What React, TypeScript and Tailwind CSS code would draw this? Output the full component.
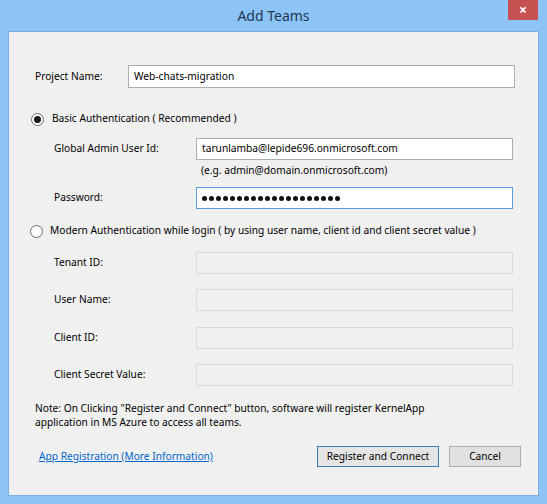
import React from 'react';

const font = { fontFamily: '"Noto Sans", "Open Sans", sans-serif' };

function Radio({ checked }: { checked?: boolean }) {
  return (
    <span className="flex h-[13px] w-[13px] shrink-0 items-center justify-center rounded-full border border-[#6b6b6b] bg-white">
      {checked && <span className="h-[7px] w-[7px] rounded-full bg-[#1a1a1a]" />}
    </span>
  );
}

function Dots({ count }: { count: number }) {
  return (
    <div className="flex gap-[2px]">
      {Array.from({ length: count }).map((_, i) => (
        <span key={i} className="h-[5px] w-[5px] rounded-full bg-[#111]" />
      ))}
    </div>
  );
}

function Field({
  label,
  children,
  disabled,
  focused,
}: {
  label: string;
  children?: React.ReactNode;
  disabled?: boolean;
  focused?: boolean;
}) {
  const box = disabled
    ? 'border-[#d9d9d9] bg-[#f0f0f0]'
    : focused
    ? 'border-[#569de5] bg-white'
    : 'border-[#abadb3] bg-white';
  return (
    <div className="flex h-[22px] items-center">
      <span className="w-[187px] shrink-0 pl-[45px]">{label}</span>
      <div className={`flex h-full w-[317px] shrink-0 items-center border px-[5px] ${box}`}>{children}</div>
    </div>
  );
}

export default function App() {
  return (
    <div className="flex h-[504px] w-[547px] flex-col bg-[#8cc4f7] text-[10.2px] text-black" style={font}>
      {/* title bar */}
      <div className="relative flex h-[31px] items-center justify-center">
        <span className="text-[14px] text-[#1f3655]">Add Teams</span>
        <div className="absolute right-[9px] top-0 flex h-[20px] w-[30px] items-center justify-center bg-[#c75050] text-[14px] font-bold leading-none text-white">
          ×
        </div>
      </div>

      {/* dialog body */}
      <div className="mx-[8px] mb-[8px] flex flex-1 flex-col border border-[#79aee0] bg-[#f0f0f0] pt-[33px]">
        <div className="flex h-[23px] items-center">
          <span className="w-[119px] shrink-0 pl-[26px]">Project Name:</span>
          <div className="flex h-full w-[387px] shrink-0 items-center border border-[#abadb3] bg-white px-[5px]">
            Web-chats-migration
          </div>
        </div>

        <div className="mt-[23px] flex h-[16px] items-center pl-[22px]">
          <Radio checked />
          <span className="ml-[8px]">Basic Authentication ( Recommended )</span>
        </div>

        <div className="mt-[11px]">
          <Field label="Global Admin User Id:">tarunlamba@lepide696.onmicrosoft.com</Field>
        </div>
        <div className="mt-[4px] flex h-[14px] items-center pl-[192px]">(e.g. admin@domain.onmicrosoft.com)</div>
        <div className="mt-[9px]">
          <Field label="Password:" focused>
            <Dots count={20} />
          </Field>
        </div>

        <div className="mt-[14px] flex h-[16px] items-center pl-[21px]">
          <Radio />
          <span className="ml-[7px]">
            Modern Authentication while login ( by using user name, client id and client secret value )
          </span>
        </div>

        <div className="mt-[13px]">
          <Field label="Tenant ID:" disabled />
        </div>
        <div className="mt-[15px]">
          <Field label="User Name:" disabled />
        </div>
        <div className="mt-[16px]">
          <Field label="Client ID:" disabled />
        </div>
        <div className="mt-[15px]">
          <Field label="Client Secret Value:" disabled />
        </div>

        <div className="mt-[15px] pl-[26px] leading-[14px]">
          <p>Note: On Clicking "Register and Connect" button, software will register KernelApp</p>
          <p>application in MS Azure to access all teams.</p>
        </div>

        <div className="mt-[17px] flex h-[21px] items-center pl-[30px]">
          <a className="text-[#0066cc] underline">App Registration (More Information)</a>
          <div className="ml-auto mr-[17px] flex gap-[10px]">
            <button className="h-[21px] w-[122px] border border-[#3c7fb1] bg-[#e5e5e5]">Register and Connect</button>
            <button className="h-[21px] w-[72px] border border-[#acacac] bg-[#e1e1e1]">Cancel</button>
          </div>
        </div>
      </div>
    </div>
  );
}
